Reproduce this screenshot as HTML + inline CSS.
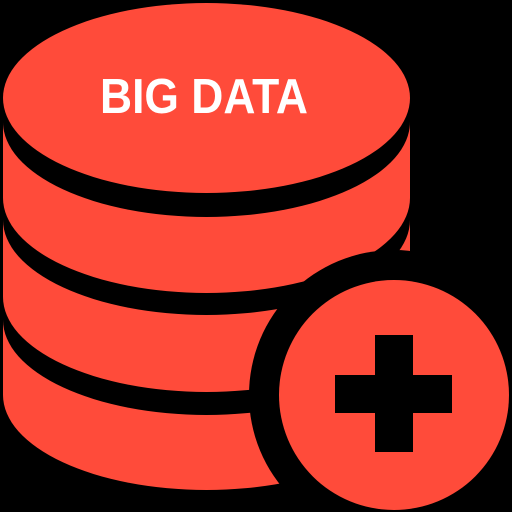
<!DOCTYPE html>
<html><head><style>html,body{margin:0;padding:0;background:#000;width:512px;height:512px;overflow:hidden;}svg{display:block}</style></head>
<body>
<svg width="512" height="512" viewBox="0 0 512 512" xmlns="http://www.w3.org/2000/svg">
<rect width="512" height="512" fill="#000"/>
<g fill="#FF4B3A">
<ellipse cx="206.5" cy="395" rx="203.5" ry="95"/>
<rect x="3" y="320" width="407" height="75"/>
</g>
<ellipse cx="206.5" cy="320" rx="203.5" ry="95" fill="#000"/>
<g fill="#FF4B3A">
<ellipse cx="206.5" cy="297" rx="203.5" ry="95"/>
<rect x="3" y="220" width="407" height="77"/>
</g>
<ellipse cx="206.5" cy="220" rx="203.5" ry="95" fill="#000"/>
<g fill="#FF4B3A">
<ellipse cx="206.5" cy="198" rx="203.5" ry="95"/>
<rect x="3" y="122" width="407" height="76"/>
</g>
<ellipse cx="206.5" cy="122" rx="203.5" ry="95" fill="#000"/>
<ellipse cx="206.5" cy="98" rx="203.5" ry="95" fill="#FF4B3A"/>
<text x="100" y="113" font-family="Liberation Sans, sans-serif" font-weight="bold" font-size="49" fill="#fff" textLength="208" lengthAdjust="spacingAndGlyphs">BIG DATA</text>
<circle cx="394" cy="395" r="145" fill="#000"/>
<circle cx="394" cy="395" r="115" fill="#FF4B3A"/>
<rect x="375" y="335" width="38" height="117" fill="#000"/>
<rect x="335" y="375" width="117" height="38" fill="#000"/>
</svg>
</body></html>
